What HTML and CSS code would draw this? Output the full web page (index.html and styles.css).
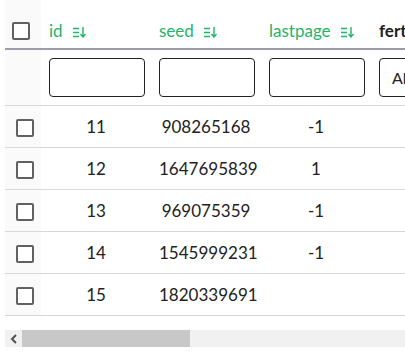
FILE: index.html
```html
<!DOCTYPE html>
<html lang="en">
<head>
<meta charset="UTF-8">
<title>Pages</title>
<link rel="stylesheet" href="styles.css">
</head>
<body>
<div class="grid-wrap">
<table class="grid">
<colgroup>
    <col class="c-sel"><col class="c-data"><col class="c-data"><col class="c-data"><col class="c-data">
    <col class="c-data"><col class="c-data"><col class="c-data"><col class="c-data"><col>
</colgroup>
<thead>
<tr class="head">
    <th class="sel head-sel"><span class="box"></span></th>
    <th class="sortable">id <svg class="sort" width="13" height="11" viewBox="0 0 13 11"><path d="M0 1.5h6M0 5.5h6M0 9.5h6M10 0v9.5M7.5 7l2.5 3 2.5-3" fill="none" stroke="currentColor" stroke-width="1.4"/></svg></th>
    <th class="sortable">seed <svg class="sort" width="13" height="11" viewBox="0 0 13 11"><path d="M0 1.5h6M0 5.5h6M0 9.5h6M10 0v9.5M7.5 7l2.5 3 2.5-3" fill="none" stroke="currentColor" stroke-width="1.4"/></svg></th>
    <th class="sortable">lastpage <svg class="sort" width="13" height="11" viewBox="0 0 13 11"><path d="M0 1.5h6M0 5.5h6M0 9.5h6M10 0v9.5M7.5 7l2.5 3 2.5-3" fill="none" stroke="currentColor" stroke-width="1.4"/></svg></th>
    <th class="plain">fertile</th>
    <th class="plain">created</th>
    <th class="plain">updated</th>
    <th class="plain">owner</th>
    <th class="plain">status</th>
    <th class="plain"></th>
</tr>
<tr class="filters">
    <th class="sel"></th>
    <th><input class="filter" type="text"></th>
    <th><input class="filter" type="text"></th>
    <th><input class="filter" type="text"></th>
    <th><select class="filter pick"><option>All</option></select></th>
    <th></th><th></th><th></th><th></th><th></th>
</tr>
</thead>
<tbody>
<tr><td class="sel"><span class="box"></span></td><td>11</td><td>908265168</td><td>-1</td><td></td><td></td><td></td><td></td><td></td><td></td></tr>
<tr><td class="sel"><span class="box"></span></td><td>12</td><td>1647695839</td><td>1</td><td></td><td></td><td></td><td></td><td></td><td></td></tr>
<tr><td class="sel"><span class="box"></span></td><td>13</td><td>969075359</td><td>-1</td><td></td><td></td><td></td><td></td><td></td><td></td></tr>
<tr><td class="sel"><span class="box"></span></td><td>14</td><td>1545999231</td><td>-1</td><td></td><td></td><td></td><td></td><td></td><td></td></tr>
<tr><td class="sel"><span class="box"></span></td><td>15</td><td>1820339691</td><td></td><td></td><td></td><td></td><td></td><td></td><td></td></tr>
</tbody>
</table>
</div>
<div class="hscroll">
    <span class="hs-btn"><svg width="8" height="10" viewBox="0 0 8 10"><path d="M6 1L2 5l4 4" fill="none" stroke="#505050" stroke-width="2"/></svg></span>
    <span class="hs-thumb"></span>
</div>
</body>
</html>
```

FILE: styles.css
```css
html, body { overflow: hidden; }
body { margin: 0; background: #fff; font-family: Lato, "Liberation Sans", sans-serif; color: #222; }

.grid-wrap { margin-left: 5px; width: 420px; overflow: hidden; background: #fff; }

.grid { width: 965px; table-layout: fixed; border-collapse: separate; border-spacing: 0; margin-bottom: 14px; }
.c-sel { width: 36px; }
.c-data { width: 110px; }

.grid th, .grid td { padding: 0 8px; border-bottom: 1px solid #d8d8d8; }
.grid .sel { padding: 0; background: #fafafa; }

.head th { height: 40px; padding-bottom: 8px; vertical-align: bottom; text-align: left; font-size: 17px; line-height: 18px; border-bottom: 2px solid #9c9cab; }
.head .head-sel { padding: 0 0 8px 7px; }
.sortable { color: #1fb56b; font-weight: normal; white-space: nowrap; }
.sort { margin-left: 6px; vertical-align: -1px; }
.plain { font-weight: bold; color: #222; white-space: nowrap; }

.filters th { height: 39px; padding-top: 8px; padding-bottom: 8px; text-align: left; }
.filters .sel { padding: 0; }
.filter { box-sizing: border-box; display: block; width: 96px; height: 39px; margin: 0; border: 1px solid #222; border-radius: 4px; background: #fff; font-family: Lato, "Liberation Sans", sans-serif; font-size: 16px; padding: 0 8px; }
.pick { color: #222; }

.grid td { height: 41px; text-align: center; font-size: 17px; color: #222; }
.grid td.sel { text-align: left; padding-left: 11px; }

.box { display: inline-block; box-sizing: border-box; width: 18px; height: 18px; border: 2px solid #616161; border-radius: 2px; vertical-align: middle; background: #fff; }

.hscroll { display: flex; margin-left: 5px; height: 17px; background: #f1f1f1; }
.hs-btn { display: flex; align-items: center; justify-content: center; width: 17px; }
.hs-thumb { width: 168px; background: #c8c8c8; }
```
